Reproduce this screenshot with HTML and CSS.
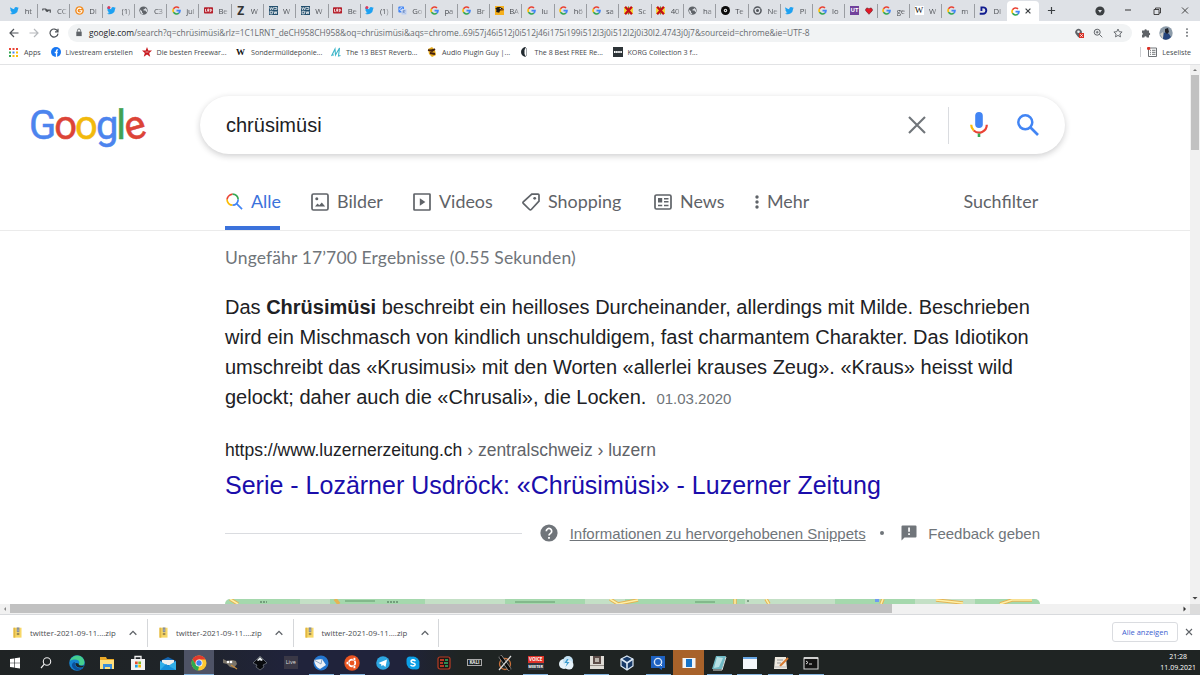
FILE: index.html
```html
<!DOCTYPE html>
<html lang="de">
<head>
<meta charset="utf-8">
<title>chrüsimüsi - Google-Suche</title>
<link rel="stylesheet" href="styles.css">
</head>
<body>
<svg class="defs" width="0" height="0">
  <symbol id="g" viewBox="0 0 18 18"><g fill="none" stroke-width="3.2"><path stroke="#ea4335" d="M3 5.6A7 7 0 0 1 14 4"/><path stroke="#fbbc05" d="M3 12.4A7 7 0 0 1 3 5.6"/><path stroke="#34a853" d="M13.6 14.2A7 7 0 0 1 3 12.4"/><path stroke="#4285f4" d="M9 9.2H16A7 7 0 0 1 13.6 14.2"/></g></symbol>
  <symbol id="tw" viewBox="0 0 24 24"><path fill="#1da1f2" d="M23.6 4.9a9.700 9.700 0 0 1-2.800.8 4.900 4.900 0 0 0 2.100-2.700c-1 .6-2 1-3.100 1.200a4.900 4.900 0 0 0-8.400 4.500C7.400 8.500 3.700 6.500 1.300 3.500a4.900 4.900 0 0 0 1.500 6.500c-.8 0-1.600-.2-2.200-.6 0 2.300 1.600 4.400 3.900 4.900-.7.200-1.500.2-2.200.1.600 2 2.400 3.400 4.600 3.400A9.900 9.900 0 0 1 0 19.800a14 14 0 0 0 21.500-12.400c.8-.7 1.500-1.500 2.100-2.500z"/></symbol>
  <symbol id="twn" viewBox="0 0 24 24"><use href="#tw"/><circle cx="5" cy="4" r="4" fill="#d93a5e"/></symbol>
  <symbol id="globe" viewBox="0 0 24 24"><circle cx="12" cy="12" r="11" fill="#5f6368"/><path fill="#dee1e6" d="M3 9l5 5v3l3 3v2C6 21 2 17 3 9zM13 3l4 2-2 3-3 1v3h5l2 3 2 1c2-5 0-10-8-13z"/></symbol>
  <symbol id="key" viewBox="0 0 24 24"><path fill="none" stroke="#4a4d51" stroke-width="3" d="M1 8h9l3 3h9v7M2 8v4M10 9c0 5 5 7 7 3"/></symbol>
  <symbol id="og" viewBox="0 0 24 24"><circle cx="12" cy="12" r="11.500" fill="#f28a1c"/><path fill="none" stroke="#fff" stroke-width="2.800" d="M17 8a6.500 6.500 0 1 0 1.500 4.500H12"/></symbol>
  <symbol id="lrd" viewBox="0 0 24 24"><rect y="3" width="24" height="17" rx="2" fill="#b51f2b"/><path fill="none" stroke="#fff" stroke-width="2" d="M4 8v7h3M10 15V8h3v4h-3l4 3M17 8h1l3 3-3 4h-1z"/></symbol>
  <symbol id="wp" viewBox="0 0 24 24"><rect width="24" height="24" fill="#24506e"/><path fill="none" stroke="#fff" stroke-width="2" d="M2 3l2 7 3-6 3 6 2-7M14 4h7v5h-7M3 14h6v7H3zM13 14l2 7 2-6 2 6 2-7"/></symbol>
  <symbol id="gt" viewBox="0 0 24 24"><rect x="1" y="1" width="15" height="16" rx="2" fill="#4285f4"/><rect x="9" y="8" width="14" height="15" rx="2" fill="#c3d4f3"/><path fill="none" stroke="#fff" stroke-width="2" d="M12 6a4 4 0 1 0 0 5H9"/><path stroke="#4b6fae" stroke-width="1.500" fill="none" d="M12 13h8M16 11v2l-3 6M14 15l5 5"/></symbol>
  <symbol id="duck" viewBox="0 0 24 24"><rect width="24" height="24" fill="#f6b01c"/><path d="M1 7c3-6 14-6 18-1l4 2v3l-9 1-3 6-8-2 1-6z" fill="#201c17"/><path d="M14 9h9v2h-8z" fill="#e8761a"/><circle cx="14" cy="6.500" r="1.500" fill="#fff"/></symbol>
  <symbol id="x" viewBox="0 0 24 24"><path fill="#f4d83b" d="M0 3h24v18H0z"/><path stroke="#c40e18" stroke-width="6" d="M3 2l18 20M21 2L3 22"/><path stroke="#321" stroke-width="1.500" d="M12 1v7M12 17v6"/></symbol>
  <symbol id="disc" viewBox="0 0 24 24"><circle cx="12" cy="12" r="12" fill="#0b0b0b"/><circle cx="12" cy="12" r="4.500" fill="#eee"/><circle cx="12" cy="12" r="1.800" fill="#111"/></symbol>
  <symbol id="chg" viewBox="0 0 24 24"><circle cx="12" cy="12" r="9.500" fill="none" stroke="#50545a" stroke-width="4"/><circle cx="12" cy="12" r="4" fill="#50545a"/><path stroke="#dee1e6" d="M12 6h10M7 14L2 6M17 14l-5 9"/></symbol>
  <symbol id="heart" viewBox="0 0 24 24"><path fill="#e21827" stroke="#4c1018" stroke-width="1.500" d="M12 22L2 11C0 4 8 0 12 6c4-6 12-2 10 5z"/></symbol>
  <symbol id="dd" viewBox="0 0 24 24"><path d="M4 1h7a11 11 0 0 1 0 22H2v-5h9a6 6 0 0 0 0-12H9v7H4z" fill="#101b8f"/></symbol>
  <symbol id="zip" viewBox="0 0 24 30"><path fill="#f7d767" d="M1 2h22v27H1z"/><path fill="#e2b743" d="M1 2h5v27H1z"/><path fill="#7e8692" d="M10 1h7v13h-7z"/><path stroke="#e9edf2" stroke-width="2" stroke-dasharray="2 2" d="M13.500 1v14"/><path fill="#a08b50" d="M10 16h7v6h-7z"/></symbol>
  <symbol id="up" viewBox="0 0 12 12"><path d="M2 8l4-4 4 4" fill="none" stroke="#5f6368" stroke-width="1.600"/></symbol>
</svg>

<div class="tabstrip">
  <div class="tabs">
    <div class="tab"><svg><use href="#tw"/></svg><span>ht</span></div>
    <div class="tab"><svg><use href="#key"/></svg><span>CC</span></div>
    <div class="tab"><svg><use href="#og"/></svg><span>DI</span></div>
    <div class="tab"><svg><use href="#twn"/></svg><span>(1)</span></div>
    <div class="tab"><svg><use href="#globe"/></svg><span>C3</span></div>
    <div class="tab"><svg><use href="#g"/></svg><span>jul</span></div>
    <div class="tab"><svg><use href="#lrd"/></svg><span>Be</span></div>
    <div class="tab"><b class="fav z">Z</b><span>W</span></div>
    <div class="tab"><svg><use href="#wp"/></svg><span>W</span></div>
    <div class="tab"><svg><use href="#wp"/></svg><span>W</span></div>
    <div class="tab"><svg><use href="#lrd"/></svg><span>Be</span></div>
    <div class="tab"><svg><use href="#twn"/></svg><span>(1)</span></div>
    <div class="tab"><svg><use href="#gt"/></svg><span>Go</span></div>
    <div class="tab"><svg><use href="#g"/></svg><span>pa</span></div>
    <div class="tab"><svg><use href="#g"/></svg><span>Br</span></div>
    <div class="tab"><svg><use href="#duck"/></svg><span>BA</span></div>
    <div class="tab"><svg><use href="#g"/></svg><span>lu</span></div>
    <div class="tab"><svg><use href="#g"/></svg><span>hö</span></div>
    <div class="tab"><svg><use href="#g"/></svg><span>sa</span></div>
    <div class="tab"><svg><use href="#x"/></svg><span>Sc</span></div>
    <div class="tab"><svg><use href="#x"/></svg><span>40</span></div>
    <div class="tab"><svg><use href="#globe"/></svg><span>ha</span></div>
    <div class="tab"><svg><use href="#disc"/></svg><span>Te</span></div>
    <div class="tab"><svg><use href="#chg"/></svg><span>Ne</span></div>
    <div class="tab"><svg><use href="#tw"/></svg><span>Pi</span></div>
    <div class="tab"><svg><use href="#g"/></svg><span>lo</span></div>
    <div class="tab"><b class="fav ut">UT</b><svg class="heart"><use href="#heart"/></svg></div>
    <div class="tab"><svg><use href="#g"/></svg><span>ge</span></div>
    <div class="tab"><b class="fav w">W</b><span>W</span></div>
    <div class="tab"><svg><use href="#g"/></svg><span>m</span></div>
    <div class="tab last"><svg><use href="#dd"/></svg><span>DI</span></div>
    <div class="tab active"><svg><use href="#g"/></svg><svg class="close" viewBox="0 0 10 10"><path d="M2 2l6 6M8 2L2 8" stroke="#3c4043" stroke-width="1.500"/></svg></div>
  </div>
  <svg class="plus" viewBox="0 0 10 10"><path d="M5 1v8M1 5h8" stroke="#3c4043" stroke-width="1.300"/></svg>
  <div class="winctl">
    <svg viewBox="0 0 10 10"><circle cx="5" cy="5" r="4.600" fill="#3c4043"/><path d="M3 4h4L5 6.800z" fill="#dee1e6"/></svg>
    <svg viewBox="0 0 10 10"><path d="M2 4h6" stroke="#333"/></svg>
    <svg viewBox="0 0 10 10"><path d="M2 3.500h5v5H2zM3.500 3.500V2h5v5H7" fill="none" stroke="#333" stroke-width=".9"/></svg>
    <svg viewBox="0 0 10 10"><path d="M2 1.500l6 6M8 1.500l-6 6" stroke="#333" stroke-width=".9"/></svg>
  </div>
</div>

<div class="toolbar">
  <div class="nav-btns">
    <svg viewBox="0 0 10 10"><path d="M9.500 5H1M5 1L1 5l4 4" fill="none" stroke="#4f5358" stroke-width="1.200"/></svg>
    <svg viewBox="0 0 10 10"><path d="M.5 5H9M5 1l4 4-4 4" fill="none" stroke="#b5b8bc" stroke-width="1.200"/></svg>
    <svg viewBox="0 0 10 10"><path d="M8.600 3.200A4 4 0 1 0 9 5.600M9 .8v3H6" fill="none" stroke="#4f5358" stroke-width="1.200"/></svg>
  </div>
  <div class="omnibox">
    <svg class="lock" viewBox="0 0 8 10"><path fill="#5f6368" d="M1 4h6v5H1z"/><path d="M2.300 4V2.700a1.700 1.700 0 0 1 3.400 0V4" fill="none" stroke="#5f6368"/></svg>
    <div class="url"><b>google.com</b>/search?q=chrüsimüsi&amp;rlz=1C1LRNT_deCH958CH958&amp;oq=chrüsimüsi&amp;aqs=chrome..69i57j46i512j0i512j46i175i199i512l3j0i512l2j0i30l2.4743j0j7&amp;sourceid=chrome&amp;ie=UTF-8</div>
    <svg class="oi" viewBox="0 0 10 10"><path d="M4.500 9.500L1.800 6a3.300 3.300 0 1 1 5.500 0z" fill="#5f6368"/><circle cx="4.500" cy="3.800" r="1.300" fill="#f1f3f4"/><path fill="#d93025" d="M5 5h5v5H5z"/><path d="M6.200 6.200l2.600 2.600M8.800 6.200L6.200 8.800" stroke="#fff" stroke-width=".8"/></svg>
    <svg class="oi" viewBox="0 0 10 10"><circle cx="4.200" cy="4.200" r="3" fill="none" stroke="#5f6368"/><path d="M6.400 6.400L9.300 9.300M2.800 4.200h2.800M4.200 2.800v2.800" stroke="#5f6368" stroke-width=".9"/></svg>
    <svg class="oi" viewBox="0 0 10 10"><path d="M5 1l1.200 2.700 2.900.3-2.200 2 .6 2.900L5 7.400 2.500 8.900l.6-2.900L.9 4l2.900-.3z" fill="none" stroke="#5f6368" stroke-width=".9"/></svg>
  </div>
  <svg class="puzzle" viewBox="0 0 10 10"><path fill="#5f6368" d="M1 2.500h2.400a1.200 1.200 0 0 1 2.400 0H8v2.300a1.200 1.200 0 0 1 0 2.400v2.200H5.700a1.200 1.200 0 0 0-2.400 0H1V7a1.200 1.200 0 0 0 0-2.300z"/></svg>
  <svg class="avatar" viewBox="0 0 14 14"><circle cx="7" cy="7" r="6.700" fill="#8c9ba9"/><path d="M4 12.500L5 7l2-1 3 2 2 3a7 7 0 0 1-8 2z" fill="#24447c"/><path d="M6 3l3-1 1 4-2 2-2-2z" fill="#1e2027"/><path d="M1 8l3-2v7z" fill="#d0cfca"/></svg>
  <svg class="dots" viewBox="0 0 4 10"><g fill="#5f6368"><circle cx="2" cy="1.200" r="1"/><circle cx="2" cy="5" r="1"/><circle cx="2" cy="8.800" r="1"/></g></svg>
</div>

<div class="bookmarks">
  <a class="bm b0"><svg viewBox="0 0 9 9"><path fill="#ea4335" d="M0 0h2v2H0zM3.500 0h2v2h-2zM7 0h2v2H7z"/><path fill="#34a853" d="M0 3.500h2v2H0z"/><path fill="#4285f4" d="M3.500 3.500h2v2h-2z"/><path fill="#fbbc05" d="M7 3.500h2v2H7zM3.500 7h2v2h-2zM7 7h2v2H7z"/><path fill="#34a853" d="M0 7h2v2H0z"/></svg><span>Apps</span></a>
  <a class="bm b1"><svg viewBox="0 0 10 10"><circle cx="5" cy="5" r="5" fill="#1877f2"/><path d="M5.500 10V4q0-1.300 1.600-1.200M3.700 5.500h3" fill="none" stroke="#fff" stroke-width="1.300"/></svg><span>Livestream erstellen</span></a>
  <a class="bm b2"><svg viewBox="0 0 10 10"><path d="M5 0l1.300 3.400L10 3.500 7.200 5.900l1 3.800L5 7.600 1.800 9.700l1-3.800L0 3.500l3.700-.1z" fill="#c8191e"/><path d="M3.500 5h3" stroke="#fff" stroke-width=".6"/></svg><span>Die besten Freewar...</span></a>
  <a class="bm b3"><b class="wiki">W</b><span>Sondermülldeponie...</span></a>
  <a class="bm b4"><svg viewBox="0 0 10 10"><path d="M.5 9L4 2l.5 6L8.500 1 7.500 9l2-.5M1 8h2" fill="none" stroke="#3db5c9" stroke-width="1.100"/></svg><span>The 13 BEST Reverb...</span></a>
  <a class="bm b5"><svg viewBox="0 0 10 10"><path fill="#e3a81e" d="M1 2l4-2 3 3 1 5-4 2-3-3z"/><path d="M1 3l4 1 3-2M3 6l5 1" stroke="#45200f" stroke-width="1.800"/></svg><span>Audio Plugin Guy |...</span></a>
  <a class="bm b6"><svg viewBox="0 0 10 10"><path d="M6 0a5 5 0 0 0 0 10L4.500 7V3z" fill="#222a30"/><path d="M6.500 1v8" stroke="#a3a8ac"/></svg><span>The 8 Best FREE Re...</span></a>
  <a class="bm b7"><svg viewBox="0 0 10 10"><path fill="#2d3438" d="M0 0h10v10H0z"/><path stroke="#fff" stroke-width="1.800" stroke-dasharray="1.600 .5" d="M1 5h8"/></svg><span>KORG Collection 3 f...</span></a>
  <div class="reading"><svg viewBox="0 0 10 10"><path d="M1.500 1h8v8.500h-8z" fill="#fff" stroke="#5f6368" stroke-width=".9"/><path d="M3 3.300h1M5 3.300h3.500M3 5.300h1M5 5.300h3.500M3 7.300h1M5 7.300h3.500" stroke="#5f6368" stroke-width=".9"/><circle cx="1.600" cy="1.400" r="1.600" fill="#d93025"/></svg><span>Leseliste</span></div>
</div>

<div class="viewport">
  <div class="page">
    <header>
      <div class="search-row">
        <div class="logo"><span class="c1">G</span><span class="c2">o</span><span class="c3">o</span><span class="c1">g</span><span class="c4">l</span><span class="c2 e">e</span></div>
        <div class="searchbox">
          <span class="query">chrüsimüsi</span>
          <svg class="clear" viewBox="0 0 18 18"><path d="M1 1l16 16M17 1L1 17" stroke="#70757a" stroke-width="2.100"/></svg>
          <i class="sep"></i>
          <svg class="mic" viewBox="0 0 18 26"><rect x="5.200" y="0" width="7.600" height="16" rx="3.800" fill="#4285f4"/><path d="M1.200 12.800a7.800 7.800 0 0 0 2.500 5.700" fill="none" stroke="#fbbc05" stroke-width="2.200"/><path d="M3.700 18.500A7.800 7.800 0 0 0 16.800 12.800" fill="none" stroke="#ea4335" stroke-width="2.200"/><path d="M9 21.500V25" stroke="#34a853" stroke-width="2.600"/></svg>
          <svg class="mag" viewBox="0 0 22 22"><circle cx="8.300" cy="8.300" r="7" fill="none" stroke="#4285f4" stroke-width="2.500"/><path d="M13.500 13.500l7.500 7.500" stroke="#4285f4" stroke-width="2.700"/></svg>
        </div>
      </div>
      <nav>
        <a class="n0 on"><svg viewBox="0 0 18 18"><g fill="none" stroke-width="1.800"><path d="M2.800 3.200A5.900 5.900 0 0 1 7 1.100" stroke="#ea4335"/><path d="M1.100 7a5.900 5.900 0 0 1 1.700-3.800" stroke="#ea4335"/><path d="M7 1.100A5.900 5.900 0 0 1 12.900 7" stroke="#34a853"/><path d="M1.100 7A5.900 5.900 0 0 0 7 12.900" stroke="#fbbc05"/><path d="M12.900 7A5.900 5.900 0 0 1 7 12.900M11.200 11.200L17 17" stroke="#4285f4"/></g></svg><span>Alle</span></a>
        <a class="n1"><svg viewBox="0 0 18 18"><rect x="1" y="1" width="16" height="16" rx="1.500" fill="none" stroke="#5f6368" stroke-width="1.700"/><path d="M4 13.500l2.500-3 1.800 1.800 2.500-2.800 3.400 4z" fill="#5f6368"/><circle cx="5.800" cy="5.800" r="1.500" fill="#5f6368"/></svg><span>Bilder</span></a>
        <a class="n2"><svg viewBox="0 0 18 18"><rect x="1" y="1" width="16" height="16" rx=".5" fill="none" stroke="#5f6368" stroke-width="1.700"/><path d="M6.800 5.300l5.600 3.700-5.600 3.700z" fill="#5f6368"/></svg><span>Videos</span></a>
        <a class="n3"><svg viewBox="0 0 18 18"><path d="M9.800 1.200L16 1q1 0 1 1v6.200L9.300 16.500q-.9.900-1.800 0L1.300 10.400q-.7-.8 0-1.600z" fill="none" stroke="#5f6368" stroke-width="1.700"/><circle cx="12.700" cy="5.300" r="1.400" fill="#5f6368"/></svg><span>Shopping</span></a>
        <a class="n4"><svg viewBox="0 0 18 18"><rect x="1" y="2" width="16" height="14" rx="1.500" fill="none" stroke="#5f6368" stroke-width="1.700"/><path d="M4 5h4.200v4.500H4z" fill="#5f6368"/><path d="M10 5.700h4.500M10 8.800h4.500M4 12.400h4.200M10 12.400h4.500" stroke="#5f6368" stroke-width="1.500"/></svg><span>News</span></a>
        <a class="n5"><svg viewBox="0 0 4 18"><g fill="#5f6368"><circle cx="2" cy="4" r="1.700"/><circle cx="2" cy="9" r="1.700"/><circle cx="2" cy="14" r="1.700"/></g></svg><span>Mehr</span></a>
        <a class="n6"><span>Suchfilter</span></a>
      </nav>
    </header>
    <main>
      <div class="stats">Ungefähr 17’700 Ergebnisse (0.55 Sekunden)</div>
      <div class="snippet">
        <div>Das <b>Chrüsimüsi</b> beschreibt ein heilloses Durcheinander, allerdings mit Milde. Beschrieben</div>
        <div>wird ein Mischmasch von kindlich unschuldigem, fast charmantem Charakter. Das Idiotikon</div>
        <div>umschreibt das «Krusimusi» mit den Worten «allerlei krauses Zeug». «Kraus» heisst wild</div>
        <div>gelockt; daher auch die «Chrusali», die Locken.<span class="date">01.03.2020</span></div>
      </div>
      <div class="cite">https://www.luzernerzeitung.ch<span> › zentralschweiz › luzern</span></div>
      <h3>Serie - Lozärner Usdröck: «Chrüsimüsi» - Luzerner Zeitung</h3>
      <div class="foot">
        <i class="rule"></i>
        <svg class="help" viewBox="0 0 18 18"><circle cx="9" cy="9" r="8.600" fill="#70757a"/><path d="M6.300 7.200a2.700 2.700 0 1 1 4.200 2.200Q9 10.400 9 11.600" fill="none" stroke="#fff" stroke-width="1.700"/><path d="M8.100 13h1.800v1.800H8.100z" fill="#fff"/></svg>
        <a class="info">Informationen zu hervorgehobenen Snippets</a>
        <i class="bullet"></i>
        <svg class="fb" viewBox="0 0 16 16"><path d="M1.500.5h13q1 0 1 1v10q0 1-1 1H3.500L.5 15.500v-14q0-1 1-1z" fill="#70757a"/><path d="M7.200 2.500h1.700v4.300H7.200zM7.200 8.300h1.700V10H7.200z" fill="#fff"/></svg>
        <span class="fbt">Feedback geben</span>
      </div>
      <svg class="map" viewBox="0 0 815 5" preserveAspectRatio="none"><path fill="#a5d8ad" d="M0 0h815v5H0z"/><path fill="#c4e0c6" d="M75 0h30v5H75zM200 0h80v5h-80zM360 0h40v5h-40zM520 0h90v5h-90zM690 0h60v5h-60z"/><path fill="#83b98c" d="M290 2h40v2h-40zM120 1h30v2h-30zM470 2h20v2h-20z"/><path d="M5 0l8 5M110 0l4 5M385 0l8 5 20-4M510 0v5M541 0l3 5M658 0l-2 5M711 1l27 3M775 5l12-4h20" fill="none" stroke="#e5b454" stroke-width="3.500"/><path d="M5 0l8 5M385 0l8 5 20-4M510 0v5M541 0l3 5M658 0l-2 5M711 1l27 3M775 5l12-4h20" fill="none" stroke="#fdf0a8" stroke-width="1.500"/><path d="M650 0h4v3h-4z" fill="#6f9cf0"/><path d="M35 3h7M162 3h12M522 2h2" stroke="#41654b" stroke-dasharray="2 1"/></svg>
    </main>
  </div>
  <div class="vscroll">
    <svg viewBox="0 0 10 10"><path d="M3 6l2-2 2 2z" fill="#777"/></svg>
    <i></i>
    <svg class="down" viewBox="0 0 10 10"><path d="M2.500 3l2.500 2.500L7.500 3z" fill="#444"/></svg>
  </div>
</div>
<div class="hscroll">
  <svg viewBox="0 0 10 10"><path d="M6 3L4 5l2 2z" fill="#888"/></svg>
  <i></i>
  <svg class="right" viewBox="0 0 10 10"><path d="M3.500 2.500L6 5 3.500 7.500z" fill="#333"/></svg>
  <b></b>
</div>

<div class="downloads">
  <div class="dl first"><svg class="zi"><use href="#zip"/></svg><span>twitter-2021-09-11....zip</span><svg class="ar"><use href="#up"/></svg></div>
  <div class="dl"><svg class="zi"><use href="#zip"/></svg><span>twitter-2021-09-11....zip</span><svg class="ar"><use href="#up"/></svg></div>
  <div class="dl"><svg class="zi"><use href="#zip"/></svg><span>twitter-2021-09-11....zip</span><svg class="ar"><use href="#up"/></svg></div>
  <a class="showall">Alle anzeigen</a>
  <svg class="dclose" viewBox="0 0 8 8"><path d="M1 1l6 6M7 1L1 7" stroke="#5f6368" stroke-width="1.100"/></svg>
</div>

<div class="taskbar">
  <div class="ti"><svg viewBox="0 0 16 16"><path fill="#fff" d="M3 4l4-.6v4.300H3zM7.600 3.300L13 2.500v5.200H7.600zM3 8.300h4v4.300L3 12zM7.600 8.300H13v5.200l-5.400-.8z"/></svg></div>
  <div class="ti"><svg viewBox="0 0 16 16"><circle cx="9" cy="6.500" r="3.700" fill="none" stroke="#eee" stroke-width="1.100"/><path d="M6.300 9.200L3 13" stroke="#eee" stroke-width="1.200"/></svg></div>
  <div class="ti"><svg viewBox="0 0 16 16"><circle cx="8" cy="8" r="7.800" fill="#1683d0"/><path d="M.8 6C3 0 11-1.500 14.500 4c2 3.500.5 6.500-2 6.500-3 0-3-1.500-2.200-2.500C11 5 6 3 .8 6z" fill="#45cf8e"/><path d="M6 7c-1 5 4 8 8.200 5.500C11 17 4 15.500 3 11c-.5-2 1-4 3-4z" fill="#0c4f9b"/><path d="M6.500 8c-.4 4 4 5.500 7.500 4 1-.5 1.300-1.500.5-1.500-4 1-5-.5-5-2z" fill="#1b2227"/></svg></div>
  <div class="ti"><svg viewBox="0 0 16 16"><path fill="#e9a928" d="M1 2h6l1 2h7v10H1z"/><path fill="#ffdf7d" d="M1 5h14v9H1z"/><path fill="#3d8fd9" d="M4 9h9v5h-2v-2H6v2H4z"/></svg></div>
  <div class="ti"><svg viewBox="0 0 16 16"><path fill="#f3f3f3" d="M1 4h14v11H1z"/><path d="M5 4V1.500h6V4" fill="none" stroke="#f3f3f3" stroke-width="1.300"/><path fill="#e74c2b" d="M5 6.500h2.700v2.700H5z"/><path fill="#7bb928" d="M8.300 6.500H11v2.700H8.300z"/><path fill="#1ba1e2" d="M5 9.800h2.700v2.700H5z"/><path fill="#f5b400" d="M8.300 9.800H11v2.700H8.300z"/></svg></div>
  <div class="ti"><svg viewBox="0 0 16 16"><path fill="#1565ae" d="M0 6l8-4 8 4v9H0z"/><path fill="#eee" d="M2 5h12v5H2z"/><path fill="#31aee8" d="M0 6l8 5 8-5v9H0z"/><path d="M0 15l6-6 2 1.500L16 15z" fill="#1690dc"/></svg></div>
  <div class="ti cur"><svg viewBox="0 0 16 16"><circle cx="8" cy="8" r="7.500" fill="#fcc831"/><path fill="#e23a2e" d="M1.500 4.300A7.500 7.500 0 0 1 14.600 4.500H8L4.500 9.500z"/><path fill="#2da94f" d="M1.500 4.300L5 10l3 1.500-1 4A7.500 7.500 0 0 1 1.500 4.300z"/><circle cx="8" cy="8" r="3.500" fill="#fff"/><circle cx="8" cy="8" r="2.700" fill="#3f83ef"/></svg></div>
  <div class="ti"><svg viewBox="0 0 16 16"><path fill="#7b756a" d="M1 4l4 2 5-1 4 1 1 3-3 4-4-1-3-3-4-1z"/><circle cx="6" cy="7" r="1.300" fill="#fff"/><circle cx="9" cy="7" r="1.300" fill="#fff"/><path d="M9 10l6 4" stroke="#c98d3d" stroke-width="1.200"/></svg></div>
  <div class="ti"><svg viewBox="0 0 16 16"><path fill="#080a0d" stroke="#8a929b" stroke-width=".6" d="M8 1l7 7-4 2 1 2-4 3-4-3 1-2-4-2z"/><path fill="#e8edf2" d="M8 2l3 3-2 1-1-1-2 1-1-1z"/></svg></div>
  <div class="ti"><b class="live">Live</b></div>
  <div class="ti run"><svg viewBox="0 0 16 16"><circle cx="8" cy="8" r="7.500" fill="#2476cf"/><path fill="#eef1f5" d="M1 5l8-1 4 6-6 4q-5-2-6-9z"/><path d="M1 5l7 4 1-5" fill="none" stroke="#8ca5c4"/></svg></div>
  <div class="ti run"><svg viewBox="0 0 16 16"><circle cx="8" cy="8" r="7.700" fill="#e95420"/><circle cx="8" cy="8" r="3.300" fill="none" stroke="#fff" stroke-width="1.700"/><g fill="#fff" stroke="#e95420" stroke-width=".6"><circle cx="3.500" cy="8" r="1.500"/><circle cx="10.400" cy="4" r="1.500"/><circle cx="10.400" cy="12" r="1.500"/></g></svg></div>
  <div class="ti"><svg viewBox="0 0 16 16"><circle cx="8" cy="8" r="6.800" fill="#2ca5e0"/><path d="M3.500 8l8.500-3.500L10.500 12 8 10l-1.500 1.300-.3-2.100z" fill="#fff"/></svg></div>
  <div class="ti"><svg viewBox="0 0 16 16"><circle cx="8" cy="8" r="6.500" fill="#0c9fe6"/><circle cx="5" cy="5" r="3.500" fill="#0c9fe6"/><circle cx="11" cy="11" r="3.500" fill="#0c9fe6"/><path d="M10.500 6Q8 4 6.300 5.500 5.500 7.200 8 7.900q3 .7 1.800 2.500Q8 11.800 5.500 10" fill="none" stroke="#fff" stroke-width="1.500"/></svg></div>
  <div class="ti"><svg viewBox="0 0 16 16"><rect x="2" y="2" width="12" height="12" rx="2" fill="#201615" stroke="#b83c24" stroke-width="1.200"/><path d="M4 5h4M4 8h3M4 11h4" stroke="#e8452b" stroke-width="1.300"/><path d="M9 5h3M8 8h4M9 11h3" stroke="#2fb56b" stroke-width="1.300"/></svg></div>
  <div class="ti"><b class="kali">KALI</b></div>
  <div class="ti"><svg viewBox="0 0 16 16"><circle cx="8" cy="9" r="5.500" fill="none" stroke="#c9703a" stroke-width="1.300"/><path d="M3 1l10 14" stroke="#bbb" stroke-width="3.800"/><path d="M3 1l10 14" stroke="#0b0b0b" stroke-width="2.800"/><path d="M14 1L2 15" stroke="#ddd" stroke-width="1.200"/></svg></div>
  <div class="ti run"><b class="voice"><i>VOICE</i><i class="m">MEETER</i></b></div>
  <div class="ti"><svg viewBox="0 0 16 16"><circle cx="6" cy="9" r="5" fill="#e7f3fa"/><circle cx="10" cy="6" r="5" fill="#c4e2f3"/><circle cx="11" cy="10" r="4.500" fill="#e7f3fa"/><path d="M9 4L6.500 8H9l-1.500 4 4-5H9l1.500-3z" fill="#3d9ccd"/></svg></div>
  <div class="ti run"><svg viewBox="0 0 16 16"><path fill="#dedbd5" d="M1 1h14v13H1z"/><path fill="#5c4c48" d="M4 1h8v8H4z"/><path fill="#b9b2aa" d="M6 3h4v4H6z"/><path fill="#968f88" d="M1 10h14v1H1z"/></svg></div>
  <div class="ti"><svg viewBox="0 0 16 16"><path fill="#183a68" stroke="#dce9f6" stroke-width="1.200" d="M8 1l6 3v7l-6 4-6-4V4z"/><path d="M2 4l6 4 6-4M8 8v7" stroke="#dce9f6" stroke-width="1.600" fill="none"/></svg></div>
  <div class="ti run"><svg viewBox="0 0 16 16"><path fill="#1e62c2" d="M1 1h14v12h-3v2l-3-2H1z"/><circle cx="8" cy="7" r="3.600" fill="none" stroke="#d7e5f6" stroke-width="1.400"/><path d="M10 9l2 2" stroke="#fff"/></svg></div>
  <div class="ti orange"><svg viewBox="0 0 16 16"><path fill="#f2f4f6" d="M1.500 3h13v10h-13z"/><path fill="#1673c7" d="M5 4h6v8H5z"/></svg></div>
  <div class="ti run"><svg viewBox="0 0 16 16"><path fill="#6fb9c4" d="M5 1h10l-4 13H1z"/><path fill="#b7e1e5" d="M6 2l6 1-4 9-5 1z"/><path d="M15 2l-4 13H2" stroke="#dce3e4" fill="none"/></svg></div>
  <div class="ti run"><svg viewBox="0 0 16 16"><path fill="#f5f7fa" d="M1 2h14v12H1z"/><path fill="#67a6e3" d="M1 2h14v2H1z"/></svg></div>
  <div class="ti run"><svg viewBox="0 0 16 16"><path fill="#eee9df" d="M2 2h11l1 12H1z"/><path d="M4 5h6M4 8h4" stroke="#999"/><path d="M15 3l-8 8" stroke="#d67930" stroke-width="2"/><path d="M2 12h11" stroke="#bbb"/></svg></div>
  <div class="ti run"><svg viewBox="0 0 16 16"><path fill="#131313" stroke="#d0d0d0" stroke-width="1.100" d="M1 3h14v11H1z"/><path d="M1 3h14" stroke="#eee" stroke-width="1.500"/><path d="M3 6l2 1.500L3 9M6 9h3" stroke="#ddd" fill="none"/></svg></div>
  <div class="clock"><span>21:28</span><span>11.09.2021</span></div>
</div>
</body>
</html>
```
FILE: styles.css
```css
* { box-sizing: border-box; }
body { margin: 0; width: 1200px; height: 675px; overflow: hidden; display: flex; flex-direction: column; background: #fff; font-family: "Open Sans", "Noto Sans", sans-serif; font-size: 8px; color: #202124; }
svg { display: block; flex: none; }
i { font-style: normal; }
.defs { position: absolute; }

/* Tab strip */
.tabstrip { height: 21px; background: #dee1e6; display: flex; align-items: center; padding-left: 5.700px; flex: none; }
.tabs { display: flex; height: 21px; align-items: center; }
.tab { width: 32.300px; height: 14px; display: flex; align-items: center; padding-left: 4.500px; border-right: 1px solid #9a9da2; white-space: nowrap; }
.tab svg, .fav { width: 9px; height: 9px; }
.tab span { width: 10px; margin-left: 5.500px; color: #4a4d52; font-size: 7.800px; letter-spacing: -.2px; line-height: 14px; -webkit-mask-image: linear-gradient(90deg, #000 40%, rgba(0,0,0,.25)); mask-image: linear-gradient(90deg, #000 40%, rgba(0,0,0,.25)); }
.tab.last { border-right-color: transparent; }
.tab.active { height: 21px; width: 32px; background: #fff; border: 0; border-radius: 4px 4px 0 0; margin-top: 1px; }
.tab .close { width: 8px; height: 8px; margin-left: 4px; }
.tab .heart { width: 8px; height: 8px; margin-left: 6px; }
.fav { flex: none; text-align: center; line-height: 9px; }
.fav.z { font: bold 12px/9px "Open Sans", sans-serif; color: #333; }
.fav.w { background: #fff; font: 9px/9px "Liberation Serif", serif; color: #111; }
.fav.ut { background: #71429c; color: #fff; font-size: 6px; }
.plus { width: 9px; height: 9px; margin-left: 8px; }
.winctl { display: flex; margin-left: auto; gap: 18.400px; padding-right: 10px; }
.winctl svg { width: 10px; height: 10px; }

/* Toolbar */
.toolbar { height: 23px; display: flex; align-items: center; flex: none; padding-left: 9px; }
.nav-btns { display: flex; gap: 10px; width: 59px; }
.nav-btns svg { width: 10px; height: 10px; }
.omnibox { width: 1064px; height: 18px; border-radius: 9px; background: #f1f3f4; display: flex; align-items: center; padding-left: 7px; }
.lock { width: 8px; height: 9px; }
.url { width: 988px; margin-left: 6px; font-size: 8.400px; line-height: 18px; white-space: nowrap; color: #686b70; }
.url b { font-weight: 400; color: #202124; }
.oi { width: 10px; height: 10px; margin-right: 9.500px; }
.puzzle { width: 10px; height: 10px; margin-left: 9px; }
.avatar { width: 14px; height: 14px; margin-left: 8px; }
.dots { width: 4px; height: 9px; margin-left: 12px; }

/* Bookmarks */
.bookmarks { height: 21px; border-bottom: 1px solid #e2e3e5; display: flex; align-items: center; flex: none; padding: 0 9px 4px; color: #45484c; font-size: 7.150px; white-space: nowrap; }
.bm { display: flex; align-items: center; }
.bm svg { width: 10px; height: 10px; margin-right: 5px; }
.bm.b0 svg { width: 9px; height: 9px; margin-right: 6px; }
.b0 { width: 41.500px; } .b1 { width: 91px; } .b2 { width: 94.500px; } .b3 { width: 95px; }
.b4 { width: 96px; } .b5 { width: 92.500px; } .b6 { width: 93px; }
.wiki { font: bold 9px/10px "Liberation Serif", serif; width: 10px; margin-right: 5px; color: #111; }
.reading { margin-left: auto; height: 10px; display: flex; align-items: center; border-left: 1px solid #ccced1; padding-left: 6px; }
.reading svg { width: 10px; height: 10px; margin-right: 5px; }

/* Page */
.viewport { height: 539px; display: flex; flex: none; overflow: hidden; }
.page { width: 1190px; font-family: "Liberation Sans", Arial, sans-serif; overflow: hidden; }
header { height: 166px; border-bottom: 1.500px solid #ebebeb; display: flex; flex-direction: column; justify-content: space-between; }
.search-row { display: flex; padding: 31px 0 0 29px; }
.logo { width: 171px; font: 400 40px/59px Roboto, sans-serif; letter-spacing: -2px; white-space: nowrap; -webkit-text-stroke: .5px currentColor; }
.c1 { color: #4c84ee; } .c2 { color: #dc4437; } .c3 { color: #f2b90c; } .c4 { color: #42a153; }
.e { display: inline-block; transform: rotate(-16deg); }
.searchbox { width: 865px; height: 58px; border-radius: 29px; background: #fff; box-shadow: 0 2px 6px rgba(32,33,36,.22); display: flex; align-items: center; padding: 0 26px; }
.query { font-size: 20px; width: 683px; }
.clear { width: 18px; height: 18px; }
.sep { width: 1px; height: 37px; background: #dadce0; margin-left: 21.500px; }
.mic { width: 18px; height: 26px; margin-left: 21.500px; }
.mag { width: 22px; height: 22px; margin-left: 29px; }
nav { display: flex; padding-left: 225px; height: 57px; font: 17.900px/57px Lato, sans-serif; color: #5f6368; }
nav a { display: flex; align-items: center; }
nav svg { width: 18px; height: 18px; margin-right: 8px; }
nav .on { color: #3b72db; width: 55px; border-bottom: 4px solid #3b72db; padding: 4px 0 0 1px; }
nav .on svg { width: 17px; height: 17px; }
.n1 { margin-left: 31px; width: 102px; } .n2 { width: 109px; } .n3 { width: 132px; } .n4 { width: 101px; } .n5 { width: 208.500px; }
nav .n5 svg { width: 4px; }
main { padding-left: 225px; width: 1040px; }
.stats { font: 17.500px/26px Lato, sans-serif; color: #70757a; padding-top: 14px; letter-spacing: .13px; white-space: nowrap; }
.snippet { font-size: 20px; line-height: 30px; padding-top: 21px; white-space: nowrap; }
.date { font-size: 15px; color: #70757a; margin-left: 10px; }
.cite { font-size: 17.500px; line-height: 26px; margin-top: 23px; }
.cite span { color: #5f6368; }
h3 { margin: 4px 0 0; font-size: 25px; line-height: 36px; font-weight: 400; color: #1a0dab; white-space: nowrap; }
.foot { display: flex; align-items: center; height: 20px; margin-top: 20px; font-size: 15px; color: #70757a; white-space: nowrap; }
.rule { width: 297px; height: 1px; background: #dadce0; }
.help { width: 18px; height: 18px; margin-left: 18px; }
.info { width: 297px; margin-left: 12px; text-decoration: underline; }
.bullet { width: 4px; height: 4px; border-radius: 50%; background: #70757a; margin-left: 14px; }
.fb { width: 16px; height: 16px; margin-left: 17px; }
.fbt { margin-left: 11px; }
.map { width: 815px; height: 5px; margin-top: 56px; border-radius: 8px 8px 0 0; }

/* Scrollbars */
.vscroll { width: 10px; background: #f1f1f1; display: flex; flex-direction: column; }
.vscroll svg, .hscroll svg { width: 10px; height: 10px; }
.vscroll i { height: 75px; width: 8px; margin-left: 1px; background: #c1c1c1; }
.vscroll .down { margin-top: auto; }
.hscroll { height: 10px; background: #f1f1f1; display: flex; flex: none; }
.hscroll i { width: 882px; height: 9px; background: #c1c1c1; }
.hscroll .right { margin-left: auto; }
.hscroll b { width: 10px; background: #dcdcdc; }

/* Download shelf */
.downloads { height: 36px; display: flex; align-items: center; flex: none; border-top: 1px solid #d8dadd; }
.dl { width: 145.600px; height: 28px; display: flex; align-items: center; padding-left: 11px; border-right: 1px solid #d5d7da; color: #4a4d51; font-size: 7.800px; white-space: nowrap; }
.dl.first { width: 148px; padding-left: 13px; }
.zi { width: 9px; height: 11px; margin-right: 8px; }
.dl span { width: 98px; }
.ar { width: 10px; height: 10px; }
.showall { margin-left: auto; width: 66px; height: 20px; border: 1px solid #dadce0; border-radius: 3px; text-align: center; line-height: 18px; color: #3c62d0; font-size: 7.500px; white-space: nowrap; margin-bottom: 1px; }
.dclose { width: 8px; height: 8px; margin: 0 7px 1px 7px; }

/* Taskbar */
.taskbar { height: 25px; flex: none; display: flex; background: linear-gradient(90deg, #1f2324 0, #1f2428 170px, #20233b 290px, #20233b 400px, #1f2423 460px); }
.ti { width: 30.620px; height: 25px; display: flex; align-items: center; justify-content: center; flex: none; }
.ti svg { width: 16px; height: 16px; }
.run { background: linear-gradient(#84b5e0, #84b5e0) 50% 100% / 25px 1.500px no-repeat; }
.cur { background: linear-gradient(#84b5e0, #84b5e0) 50% 100% / 30px 1.500px no-repeat, #4e5366; }
.orange { background: #a8622a; }
.live { width: 14px; height: 13px; background: #3a3846; color: #ddd; font-size: 5.500px; line-height: 13px; text-align: center; font-weight: 400; }
.kali { border: 1px solid #aaa; color: #eee; font-size: 4.500px; line-height: 5px; padding: 0 1px; }
.voice { width: 16px; height: 14px; display: flex; flex-direction: column; font-size: 4.500px; line-height: 7px; text-align: center; color: #fff; background: #de3229; }
.voice .m { background: #30363f; font-size: 3.800px; }
.clock { margin-left: auto; padding: 1px 4px 0 0; display: flex; flex-direction: column; align-items: center; color: #fff; font-size: 7px; line-height: 11px; }
```
